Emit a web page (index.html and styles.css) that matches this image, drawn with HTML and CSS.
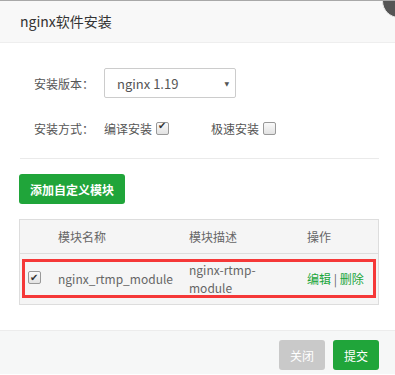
FILE: index.html
```html
<!DOCTYPE html>
<html lang="zh-CN">
<head>
    <meta charset="UTF-8">
    <meta name="viewport" content="width=device-width, initial-scale=1.0">
    <title>nginx软件安装</title>
    <link rel="stylesheet" href="styles.css">
</head>
<body>
    <div class="layer">
        <div class="layer-title">nginx软件安装</div>
        <span class="layer-close"></span>

        <div class="layer-content">
            <div class="form-line">
                <span class="form-label">安装版本：</span>
                <div class="select">
                    <span>nginx 1.19</span>
                    <span class="caret">&#9660;</span>
                </div>
            </div>
            <div class="form-line">
                <span class="form-label">安装方式：</span>
                <label class="check-item">编译安装 <span class="check checked"></span></label>
                <label class="check-item fast">极速安装 <span class="check"></span></label>
            </div>

            <div class="divider"></div>

            <button class="btn btn-green btn-add">添加自定义模块</button>

            <div class="table-wrap">
                <table class="module-table">
                    <thead>
                        <tr>
                            <th class="col-check"></th>
                            <th class="col-name">模块名称</th>
                            <th class="col-desc">模块描述</th>
                            <th class="col-op">操作</th>
                        </tr>
                    </thead>
                    <tbody>
                        <tr>
                            <td class="col-check"><span class="check checked"></span></td>
                            <td class="col-name">nginx_rtmp_module</td>
                            <td class="col-desc">nginx-rtmp-<br>module</td>
                            <td class="col-op"><a href="#">编辑</a> | <a href="#">删除</a></td>
                        </tr>
                    </tbody>
                </table>
                <!-- highlight box drawn over the row -->
                <div class="row-mark"></div>
            </div>
        </div>

        <div class="layer-footer">
            <button class="btn btn-gray">关闭</button>
            <button class="btn btn-green">提交</button>
        </div>
    </div>
</body>
</html>
```

FILE: styles.css
```css
body {
    margin: 0;
    background-color: #ffffff;
    font-family: "Noto Sans CJK SC", "Noto Sans", sans-serif;
    font-size: 12px;
    color: #555;
}

.layer {
    position: relative;
    width: 395px;
    height: 375px;
    overflow: hidden;
    border-top: 1px solid #a8a8a8;
    box-sizing: border-box;
}

.layer-title {
    height: 41px;
    line-height: 41px;
    padding-left: 20px;
    background-color: #f8f8f8;
    border-bottom: 1px solid #eeeeee;
    font-size: 14px;
    color: #333;
}

.layer-close {
    position: absolute;
    top: -17px;
    right: -21px;
    width: 32px;
    height: 32px;
    border-radius: 50%;
    background-color: #555;
    border: 1px solid #e4e4e4;
}

.layer-content {
    padding: 25px 16px 0 19px;
    height: 287px;
    box-sizing: border-box;
}

.form-line {
    display: flex;
    align-items: center;
    height: 30px;
    margin-bottom: 15px;
}

.form-label {
    width: 70px;
    padding-left: 15px;
    color: #555;
}

.select {
    display: flex;
    justify-content: space-between;
    align-items: center;
    width: 132px;
    height: 30px;
    box-sizing: border-box;
    padding: 0 6px 0 12px;
    border: 1px solid #ccc;
    border-radius: 2px;
    font-size: 13px;
    color: #555;
}

.caret {
    font-family: "DejaVu Sans", sans-serif;
    font-size: 6px;
    color: #555;
}

.check-item {
    display: flex;
    align-items: center;
    gap: 4px;
    color: #555;
}

.check-item.fast {
    margin-left: 42px;
}

.check {
    display: inline-block;
    width: 11px;
    height: 11px;
    border: 1px solid #999;
    border-radius: 2px;
    background: linear-gradient(#fafafa, #e2e2e2);
    position: relative;
}

.check.checked::after {
    content: "\2714";
    position: absolute;
    left: 1px;
    top: -3px;
    font-family: "DejaVu Sans", sans-serif;
    font-size: 10px;
    color: #333;
}

.divider {
    height: 1px;
    background-color: #eaeaea;
    margin: 5px 0 15px 1px;
}

.btn {
    border: none;
    border-radius: 3px;
    height: 30px;
    padding: 0 10px;
    font-family: "Noto Sans CJK SC", sans-serif;
    font-size: 12px;
    color: #fff;
    cursor: pointer;
}

.btn-green {
    background-color: #20a53a;
}

.btn-gray {
    background-color: #c9c9c9;
}

.btn-add {
    width: 106px;
    font-weight: bold;
    padding: 0;
}

.table-wrap {
    position: relative;
    margin-top: 15px;
    width: 360px;
}

.module-table {
    width: 360px;
    border-collapse: collapse;
    border: 1px solid #ddd;
    background-color: #f5f5f5;
    table-layout: fixed;
}

.module-table th {
    height: 33px;
    font-weight: normal;
    text-align: left;
    color: #666;
    border-bottom: 1px solid #ddd;
}

.module-table td {
    height: 50px;
    line-height: 18px;
    color: #666;
    font-size: 12px;
}

.module-table th,
.module-table td {
    padding: 0 0 0 7px;
}

.col-check {
    width: 24px;
}

.module-table td.col-check {
    padding-left: 8px;
}

.col-name {
    width: 124px;
}

.col-desc {
    width: 111px;
}

.col-op a {
    color: #20a53a;
    text-decoration: none;
}

.row-mark {
    position: absolute;
    left: 3px;
    top: 40px;
    width: 348px;
    height: 33px;
    border: 3px solid #f53838;
}

.layer-footer {
    display: flex;
    justify-content: flex-end;
    gap: 8px;
    padding: 9px 16px 0 0;
    height: 44px;
    box-sizing: border-box;
    background-color: #f6f7f7;
    border-top: 1px solid #ececec;
}

.layer-footer .btn {
    width: 46px;
    padding: 0;
}
```
